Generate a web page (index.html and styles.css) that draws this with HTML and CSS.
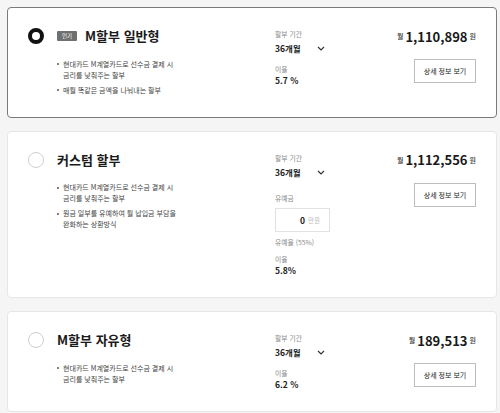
FILE: index.html
```html
<!DOCTYPE html>
<html lang="ko">
<head>
<meta charset="utf-8">
<link rel="stylesheet" href="styles.css">
</head>
<body>
<div class="list">
  <div class="card selected">
    <div class="left">
      <div class="head">
        <span class="radio on"></span>
        <span class="badge">인기</span>
        <span class="title">M할부 일반형</span>
      </div>
      <ul class="bullets">
        <li>현대카드 M계열카드로 선수금 결제 시<br>금리를 낮춰주는 할부</li>
        <li>매월 똑같은 금액을 나눠내는 할부</li>
      </ul>
    </div>
    <div class="mid">
      <div class="label">할부 기간</div>
      <div class="select"><span class="value">36개월</span><svg class="chev" viewBox="0 0 8 5" width="8" height="5"><path d="M1 1 L4 4 L7 1" fill="none" stroke="#333" stroke-width="1.2"/></svg></div>
      <div class="label gap-rate">이율</div>
      <div class="value">5.7 %</div>
    </div>
    <div class="right">
      <div class="price"><span class="unit">월</span><span class="num">1,110,898</span><span class="unit">원</span></div>
      <button class="btn">상세 정보 보기</button>
    </div>
  </div>

  <div class="card">
    <div class="left">
      <div class="head">
        <span class="radio"></span>
        <span class="title">커스텀 할부</span>
      </div>
      <ul class="bullets">
        <li>현대카드 M계열카드로 선수금 결제 시<br>금리를 낮춰주는 할부</li>
        <li>원금 일부를 유예하여 월 납입금 부담을<br>완화하는 상환방식</li>
      </ul>
    </div>
    <div class="mid">
      <div class="label">할부 기간</div>
      <div class="select"><span class="value">36개월</span><svg class="chev" viewBox="0 0 8 5" width="8" height="5"><path d="M1 1 L4 4 L7 1" fill="none" stroke="#333" stroke-width="1.2"/></svg></div>
      <div class="label gap-defer">유예금</div>
      <div class="input"><span class="in-num">0</span><span class="in-unit">만원</span></div>
      <div class="label gap-ratio">유예율 (55%)</div>
      <div class="label gap-rate2">이율</div>
      <div class="value gap-val">5.8%</div>
    </div>
    <div class="right">
      <div class="price"><span class="unit">월</span><span class="num">1,112,556</span><span class="unit">원</span></div>
      <button class="btn">상세 정보 보기</button>
    </div>
  </div>

  <div class="card">
    <div class="left">
      <div class="head">
        <span class="radio"></span>
        <span class="title">M할부 자유형</span>
      </div>
      <ul class="bullets">
        <li>현대카드 M계열카드로 선수금 결제 시<br>금리를 낮춰주는 할부</li>
      </ul>
    </div>
    <div class="mid">
      <div class="label">할부 기간</div>
      <div class="select"><span class="value">36개월</span><svg class="chev" viewBox="0 0 8 5" width="8" height="5"><path d="M1 1 L4 4 L7 1" fill="none" stroke="#333" stroke-width="1.2"/></svg></div>
      <div class="label gap-rate">이율</div>
      <div class="value">6.2 %</div>
    </div>
    <div class="right">
      <div class="price"><span class="unit">월</span><span class="num">189,513</span><span class="unit">원</span></div>
      <button class="btn">상세 정보 보기</button>
    </div>
  </div>
</div>
</body>
</html>
```
FILE: styles.css
```css
* { box-sizing: border-box; }
html, body {
  margin: 0;
  padding: 0;
  background: #f5f5f5;
  font-family: "Noto Sans CJK KR", "Noto Sans", sans-serif;
  color: #222;
}
.list {
  padding: 7px 3px 0 7px;
  display: flex;
  flex-direction: column;
  gap: 13px;
}
.card {
  background: #fff;
  border: 1px solid #e6e6e6;
  border-radius: 4px;
  display: flex;
  padding: 20px 20px 21px 20px;
}
.card.selected { border-color: #7a7a7a; }
.left { width: 247px; flex: none; }
.head {
  display: flex;
  align-items: center;
  height: 16px;
}
.radio {
  width: 16px;
  height: 16px;
  border-radius: 50%;
  border: 1px solid #cfcfcf;
  background: #fff;
  flex: none;
  margin-right: 13px;
}
.radio.on { border: 4.5px solid #111; }
.badge {
  background: #707070;
  color: #fff;
  font-size: 5.5px;
  line-height: 10px;
  width: 20px;
  height: 10px;
  text-align: center;
  border-radius: 1px;
  margin-right: 8px;
}
.title {
  font-size: 13px;
  font-weight: 700;
  line-height: 16px;
  color: #1a1a1a;
}
.bullets {
  list-style: none;
  margin: 14.5px 0 0 29px;
  padding: 0;
}
.bullets li {
  position: relative;
  padding-left: 6px;
  font-size: 7px;
  line-height: 11px;
  color: #444;
}
.bullets li + li { margin-top: 4px; }
.bullets li::before {
  content: "";
  position: absolute;
  left: 0;
  top: 4.5px;
  width: 2px;
  height: 2px;
  border-radius: 50%;
  background: #555;
}
.mid {
  flex: 1;
  padding-top: 2px;
}
.label {
  font-size: 6.8px;
  line-height: 9px;
  color: #8a8a8a;
}
.value {
  font-size: 8.5px;
  font-weight: 700;
  line-height: 12px;
  color: #222;
}
.select {
  display: flex;
  align-items: center;
  width: 50px;
  justify-content: space-between;
  margin-top: 3px;
}
.chev { display: block; margin-top: 1px; }
.gap-rate { margin-top: 11px; }
.gap-defer { margin-top: 16px; }
.input {
  margin-top: 5.5px;
  width: 55px;
  height: 24px;
  border: 1px solid #e2e2e2;
  display: flex;
  align-items: center;
  justify-content: flex-end;
  padding-right: 9px;
  gap: 3px;
}
.in-num { font-size: 8.5px; font-weight: 700; color: #222; }
.in-unit { font-size: 6.5px; color: #bbb; }
.gap-ratio { margin-top: 5.5px; }
.gap-rate2 { margin-top: 8px; }
.gap-val { margin-top: 0.5px; }
.right {
  display: flex;
  flex-direction: column;
  align-items: flex-end;
}
.price {
  display: flex;
  align-items: center;
  height: 16px;
  white-space: nowrap;
}
.price .unit {
  font-size: 7px;
  color: #333;
  font-weight: 500;
}
.price .num {
  font-size: 13px;
  font-weight: 700;
  color: #1a1a1a;
  margin: 0 2px;
}
.btn {
  margin-top: 15px;
  width: 62px;
  height: 24px;
  background: #fff;
  border: 1px solid #bdbdbd;
  font-family: inherit;
  font-size: 7px;
  color: #222;
  padding: 0;
}
```
